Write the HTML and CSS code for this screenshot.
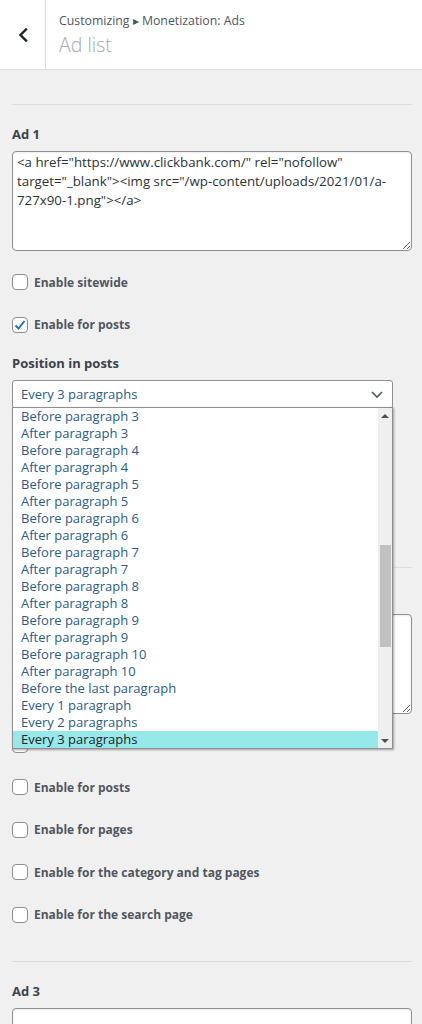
FILE: index.html
```html
<!DOCTYPE html>
<html lang="en">
<head>
<meta charset="utf-8">
<title>Ad list</title>
<link rel="stylesheet" href="styles.css">
</head>
<body>
<header class="header">
  <div class="back">
    <svg width="20" height="20" viewBox="0 0 20 20"><polyline points="13,4.5 7.5,10 13,15.5" fill="none" stroke="#1d2327" stroke-width="2.4" stroke-linecap="square"/></svg>
  </div>
  <div class="titles">
    <div class="crumb">Customizing ▸ Monetization: Ads</div>
    <div class="title">Ad list</div>
  </div>
</header>

<main class="content">
  <section class="ad">
    <div class="ad-title">Ad 1</div>
    <textarea class="code">&lt;a href="https://www.clickbank.com/" rel="nofollow" target="_blank"&gt;&lt;img src="/wp-content/uploads/2021/01/a-727x90-1.png"&gt;&lt;/a&gt;</textarea>
    <label class="row"><span class="box"></span><span class="lbl">Enable sitewide</span></label>
    <label class="row"><span class="box checked"><svg width="14" height="14" viewBox="0 0 14 14"><polyline points="2.5,7.5 5.5,10.5 11.5,3" fill="none" stroke="#2271b1" stroke-width="2"/></svg></span><span class="lbl">Enable for posts</span></label>
    <div class="field-title">Position in posts</div>
    <div class="select-wrap">
      <div class="select">
        <span>Every 3 paragraphs</span>
        <svg class="chev" width="14" height="10" viewBox="0 0 14 10"><polyline points="2,3 7,8 12,3" fill="none" stroke="#50575e" stroke-width="1.6"/></svg>
      </div>
      <div class="listbox">
        <ul class="options">
          <li>Before paragraph 3</li>
          <li>After paragraph 3</li>
          <li>Before paragraph 4</li>
          <li>After paragraph 4</li>
          <li>Before paragraph 5</li>
          <li>After paragraph 5</li>
          <li>Before paragraph 6</li>
          <li>After paragraph 6</li>
          <li>Before paragraph 7</li>
          <li>After paragraph 7</li>
          <li>Before paragraph 8</li>
          <li>After paragraph 8</li>
          <li>Before paragraph 9</li>
          <li>After paragraph 9</li>
          <li>Before paragraph 10</li>
          <li>After paragraph 10</li>
          <li>Before the last paragraph</li>
          <li>Every 1 paragraph</li>
          <li>Every 2 paragraphs</li>
          <li class="sel">Every 3 paragraphs</li>
        </ul>
        <div class="scrollbar">
          <span class="arrow up"></span>
          <span class="thumb"></span>
          <span class="arrow down"></span>
        </div>
      </div>
    </div>
    <label class="row after-select"><span class="box"></span><span class="lbl">Enable for pages</span></label>
    <label class="row"><span class="box"></span><span class="lbl">Enable for the category and tag pages</span></label>
    <label class="row"><span class="box"></span><span class="lbl">Enable for the search page</span></label>
  </section>

  <section class="ad">
    <div class="ad-title">Ad 2</div>
    <textarea class="code"></textarea>
    <label class="row"><span class="box"></span><span class="lbl">Enable sitewide</span></label>
    <label class="row"><span class="box"></span><span class="lbl">Enable for posts</span></label>
    <label class="row"><span class="box"></span><span class="lbl">Enable for pages</span></label>
    <label class="row"><span class="box"></span><span class="lbl">Enable for the category and tag pages</span></label>
    <label class="row"><span class="box"></span><span class="lbl">Enable for the search page</span></label>
  </section>

  <section class="ad">
    <div class="ad-title">Ad 3</div>
    <textarea class="code"></textarea>
  </section>
</main>
</body>
</html>
```

FILE: styles.css
```css
* { box-sizing: border-box; }
html, body { margin: 0; padding: 0; }
body {
  background: #f0f0f1;
  font-family: "Open Sans", "Noto Sans", sans-serif;
  color: #50575e;
  width: 422px;
  overflow: hidden;
}
.header {
  display: flex;
  height: 70px;
  background: #fff;
  border-bottom: 1px solid #dcdcde;
}
.back {
  width: 46px;
  border-right: 1px solid #dcdcde;
  display: flex;
  align-items: center;
  justify-content: center;
}
.titles {
  padding: 12px 0 0 13px;
}
.crumb {
  font-size: 12.3px;
  line-height: 18px;
  color: #50575e;
}
.title {
  font-size: 19.5px;
  line-height: 26px;
  font-weight: 300;
  color: #a7aaad;
  margin-top: 2px;
}
.content {
  padding: 34px 10px 0 12px;
}
.ad {
  border-top: 1px solid #dcdcde;
  padding: 20px 0 36px;
}
.ad-title, .field-title {
  font-size: 13px;
  line-height: 18px;
  font-weight: 700;
  color: #3c434a;
}
.ad-title { margin-bottom: 8px; }
.code {
  display: block;
  width: 400px;
  height: 100px;
  margin: 0;
  padding: 1px 4px;
  border: 1px solid #8c8f94;
  border-radius: 4px;
  background: #fff;
  font-family: inherit;
  font-size: 13.3px;
  line-height: 19px;
  color: #2c3338;
  resize: vertical;
  box-shadow: inset 0 1px 2px rgba(0,0,0,.07);
}
.row {
  display: flex;
  align-items: center;
  gap: 6px;
  height: 20px;
  margin-top: 22.5px;
}
.code + .row { margin-top: 21px; }
.row.after-select { margin-top: 17px; }
.box {
  width: 16px;
  height: 16px;
  border: 1px solid #8c8f94;
  border-radius: 4px;
  background: #fff;
  display: flex;
  align-items: center;
  justify-content: center;
  flex: none;
}
.lbl {
  font-size: 12px;
  font-weight: 700;
  color: #50575e;
}
.field-title {
  margin-top: 19px;
  margin-bottom: 8px;
}
.select-wrap {
  position: relative;
  width: 381px;
}
.select {
  height: 29px;
  display: flex;
  align-items: center;
  justify-content: space-between;
  padding: 0 8px 0 8px;
  background: #fff;
  border: 1px solid #8c8f94;
  border-radius: 3px;
  font-size: 13px;
  color: #2a5c8a;
}
.listbox {
  position: absolute;
  left: 0;
  top: 27px;
  width: 381px;
  height: 342px;
  background: #fff;
  border: 1px solid #8f8f8f;
  box-shadow: 1px 1px 2px rgba(0,0,0,.35);
  display: flex;
  z-index: 5;
}
.options {
  list-style: none;
  margin: 0;
  padding: 0;
  flex: 1;
}
.options li {
  height: 17px;
  line-height: 17px;
  padding-left: 8px;
  font-size: 13px;
  color: #2a5c8a;
  white-space: nowrap;
}
.options li.sel {
  background: #96e9e9;
  color: #1d2327;
}
.scrollbar {
  width: 14px;
  background: #efefef;
  position: relative;
  flex: none;
}
.thumb {
  position: absolute;
  left: 2px;
  right: 1px;
  top: 137px;
  height: 102px;
  background: #c1c1c1;
}
.arrow {
  position: absolute;
  left: 3px;
  width: 0;
  height: 0;
  border-left: 4px solid transparent;
  border-right: 4px solid transparent;
}
.arrow.up { top: 6px; border-bottom: 4px solid #505050; }
.arrow.down { bottom: 5px; border-top: 4px solid #505050; }
```
